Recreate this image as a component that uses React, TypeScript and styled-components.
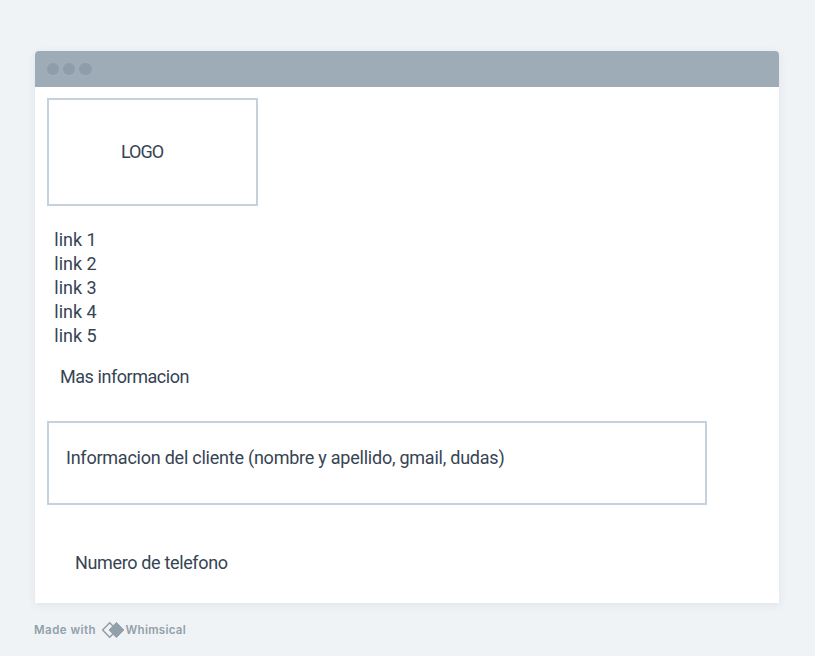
import React from "react";
import styled, { createGlobalStyle } from "styled-components";

const GlobalStyle = createGlobalStyle`
  * { box-sizing: border-box; }
  body { margin: 0; background: #eff3f6; }
`;

const Page = styled.main`
  height: 656px;
  padding: 51px 35px 0;
  overflow: hidden;
  background: #eff3f6;
`;

const BrowserWindow = styled.section`
  width: 744.4px;
  height: 552px;
  border-radius: 4px 4px 0 0;
  background: #fff;
  box-shadow: 0 2px 8px rgba(50, 70, 85, 0.08);
`;

const TitleBar = styled.header`
  display: flex;
  align-items: center;
  gap: 3.7px;
  height: 36px;
  padding-left: 12px;
  border-radius: 4px 4px 0 0;
  background: #9eacb8;
`;

const Dot = styled.span`
  width: 12.4px;
  height: 12.4px;
  border-radius: 50%;
  background: #8f9dab;
`;

const Content = styled.div`
  display: flex;
  flex-direction: column;
  align-items: flex-start;
  padding: 11px 12px 0;
`;

const Label = styled.span<{ $spacing?: number }>`
  font: 400 18px/24px Roboto, sans-serif;
  letter-spacing: ${({ $spacing = 0 }) => $spacing}px;
  color: #364453;
  white-space: nowrap;
`;

const LogoBox = styled.div`
  display: flex;
  align-items: center;
  width: 211px;
  height: 108px;
  padding-left: 72px;
  border: 2px solid #c5d1dc;
`;

const Links = styled.nav`
  display: flex;
  flex-direction: column;
  margin: 22px 0 0 7.3px;
`;

const MoreInfo = styled.div`
  display: flex;
  margin: 17px 0 0 13px;
`;

const ClientBox = styled.div`
  display: flex;
  width: 660.4px;
  height: 84px;
  margin-top: 32px;
  padding: 23px 0 0 17px;
  border: 2px solid #c5d1dc;
`;

const Phone = styled.div`
  display: flex;
  margin: 46px 0 0 28px;
`;

const Credit = styled.footer`
  display: flex;
  align-items: center;
  height: 18px;
  margin: 18px 0 0 -1px;
`;

const CreditText = styled.span<{ $spacing: number }>`
  font: 600 11.5px/18px Inter, sans-serif;
  letter-spacing: ${({ $spacing }) => $spacing}px;
  color: #93a0aa;
  white-space: nowrap;
`;

const Mark = styled.svg`
  flex: none;
  width: 24px;
  height: 18px;
  margin: 0 1px 0 4.5px;
`;

export default function App() {
  return (
    <Page>
      <GlobalStyle />
      <BrowserWindow>
        <TitleBar>
          <Dot />
          <Dot />
          <Dot />
        </TitleBar>
        <Content>
          <LogoBox>
            <Label $spacing={-1}>LOGO</Label>
          </LogoBox>
          <Links>
            {[1, 2, 3, 4, 5].map((n) => (
              <Label key={n} $spacing={0}>link {n}</Label>
            ))}
          </Links>
          <MoreInfo>
            <Label $spacing={-0.45}>Mas informacion</Label>
          </MoreInfo>
          <ClientBox>
            <Label $spacing={-0.235}>
              Informacion del cliente (nombre y apellido, gmail, dudas)
            </Label>
          </ClientBox>
          <Phone>
            <Label $spacing={-0.35}>Numero de telefono</Label>
          </Phone>
        </Content>
      </BrowserWindow>
      <Credit>
        <CreditText $spacing={0.47}>Made with</CreditText>
        <Mark viewBox="0 0 24 18" aria-hidden="true">
          <path
            d="M8.7 1.7 L15.8 9 L8.7 16.3 L1.6 9 Z"
            fill="none"
            stroke="#93a0aa"
            strokeWidth="1.6"
            strokeLinejoin="round"
          />
          <path
            d="M15.4 1.4 L22.8 9 L15.4 16.6 L8 9 Z"
            fill="#93a0aa"
            stroke="#93a0aa"
            strokeWidth="1"
            strokeLinejoin="round"
          />
        </Mark>
        <CreditText $spacing={0.27}>Whimsical</CreditText>
      </Credit>
    </Page>
  );
}
